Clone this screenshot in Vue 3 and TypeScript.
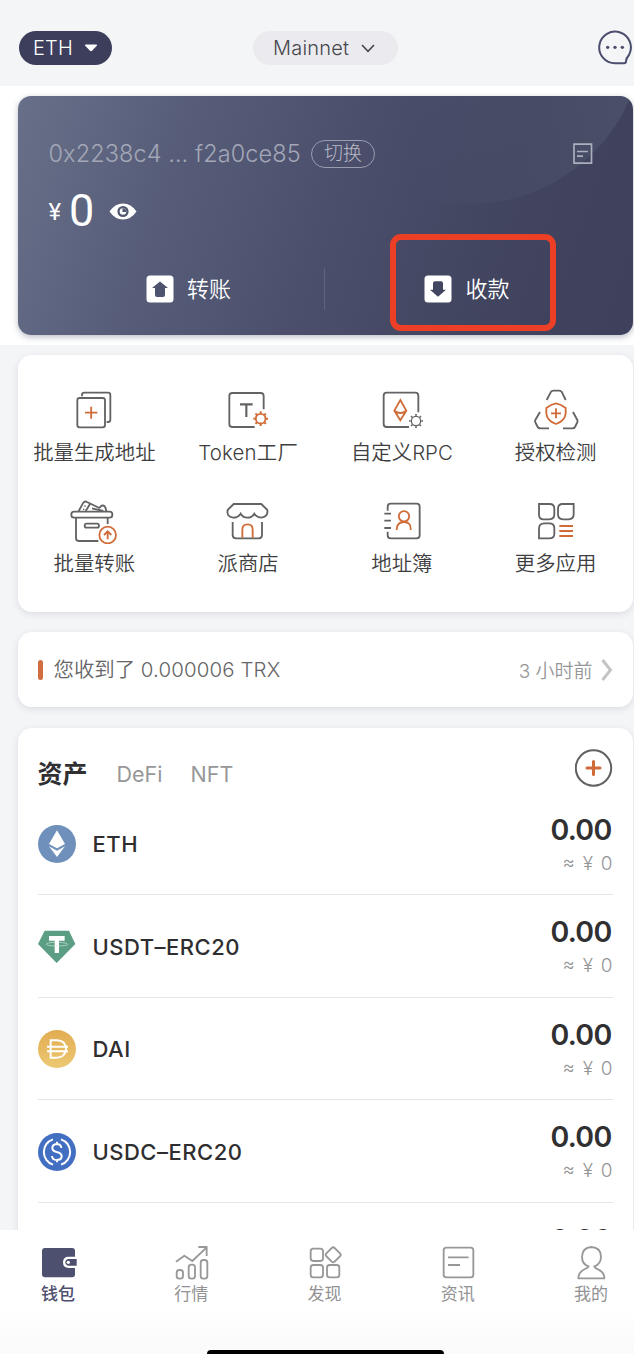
<script setup lang="ts">
interface Token {
  id: string
  name: string
}

const tokens: Token[] = [
  { id: 'eth', name: 'ETH' },
  { id: 'usdt', name: 'USDT–ERC20' },
  { id: 'dai', name: 'DAI' },
  { id: 'usdc', name: 'USDC–ERC20' },
  { id: 'next', name: '' },
]
const teeth: number[] = [0, 45, 90, 135, 180, 225, 270, 315]
</script>

<template>
  <div class="app">
    <header class="top">
      <div class="pill chain">
        <span>ETH</span>
        <svg width="14" height="8" viewBox="0 0 14 8"><path d="M1.5.5h11q1 .4.3 1.2L8 6.8q-1 .8-2 0L1.200 1.700Q.5.900 1.500.500z" fill="#fff" /></svg>
      </div>
      <div class="pill network">
        <span>Mainnet</span>
        <svg width="14" height="9" viewBox="0 0 14 9"><path d="M1 1l6 6.300L13 1" fill="none" stroke="#46464c" stroke-width="1.600" /></svg>
      </div>
      <svg class="chat" width="36" height="36" viewBox="532 90 108 108">
        <path d="M586 190A47.500 47.500 0 1 1 628 165Q620 174 619 183Q619 190 613 190Z" fill="none" stroke="#4b4d6d" stroke-width="6" stroke-linejoin="round" />
        <g fill="#4b4d6d"><circle cx="564" cy="142" r="5" /><circle cx="586" cy="142" r="5" /><circle cx="608" cy="142" r="5" /></g>
      </svg>
    </header>

    <section class="wallet-wrap">
      <div class="wallet">
        <div class="glow-clip"><div class="glow"></div></div>
        <div class="address-row">
          <span class="address">0x2238c4 ... f2a0ce85</span>
          <span class="switch">切换</span>
          <svg class="doc" width="20" height="22" viewBox="0 0 20 22" fill="none" stroke="#aaaebd" stroke-width="1.700"><path d="M1 1.200h17.500v19H1zM4 8.500h11M4 13.200h6" /></svg>
        </div>
        <div class="balance">
          <span class="yen">¥</span><span class="zero">0</span>
          <svg width="28" height="17" viewBox="0 0 28 17">
            <path d="M.5 8.500Q6 .5 14 .5t13.500 8Q22 16.500 14 16.500T.5 8.500z" fill="#fff" />
            <circle cx="14" cy="8.500" r="5.600" fill="#51576f" /><circle cx="14" cy="8.500" r="3.300" fill="#fff" />
            <path d="M13.500 8.900V5.200a3.300 3.300 0 0 1 3.700 3.700z" fill="#51576f" />
          </svg>
        </div>
        <div class="actions">
          <div class="action send">
            <svg width="28" height="28" viewBox="0 0 28 28"><rect x=".5" y=".5" width="27" height="27" rx="3.500" fill="#fff" /><path d="M14 6.500l8 6.500h-3v7q0 2-2 2h-6q-2 0-2-2v-7H6z" fill="#4e536f" /></svg>
            <span>转账</span>
          </div>
          <div class="divider"></div>
          <div class="action receive">
            <svg width="28" height="28" viewBox="0 0 28 28"><rect x=".5" y=".5" width="27" height="27" rx="3.500" fill="#fff" /><path d="M14 21.800l8-7h-3V8.300q0-2-2-2h-6q-2 0-2 2v6.500H6z" fill="#42455f" /></svg>
            <span>收款</span>
          </div>
        </div>
        <div class="highlight"></div>
      </div>
    </section>

    <main class="content">
      <section class="card features">
        <div class="feature">
          <svg class="ficon" viewBox="140 30 168 144">
            <path d="M188 64v-4q0-7 7-7h71q7 0 7 7v74q0 7-7 7h-4" /><rect x="174" y="69" width="83" height="88" rx="7" /><path class="o" d="M197 113h37M215.500 95v36" />
          </svg>
          <span>批量生成地址</span>
        </div>
        <div class="feature">
          <svg class="ficon" viewBox="601 30 168 144">
            <path d="M732 103V63q0-9-9-9h-85q-9 0-9 9v84q0 9 9 9h67" /><path d="M661 88h38M680 88v38" stroke-width="6.500" />
            <circle class="o" cx="723" cy="131" r="14.500" /><g class="o" stroke-width="6"><path v-for="a in teeth" :key="a" d="M723 115v-6" :transform="`rotate(${a} 723 131)`" /></g>
          </svg>
          <span class="latin">Token工厂</span>
        </div>
        <div class="feature">
          <svg class="ficon" viewBox="132 30 168 144">
            <path d="M265 112V62q0-9-9-9h-86q-9 0-9 9v85q0 9 9 9h67" /><path class="o" d="M211 75l18 32-18 29-18-29zM193 107q18 14 36 0" />
            <circle cx="258" cy="138" r="14" stroke-width="4" /><g stroke-width="5"><path v-for="a in teeth" :key="a" d="M258 122v-5" :transform="`rotate(${a} 258 138)`" /></g>
          </svg>
          <span>自定义RPC</span>
        </div>
        <div class="feature">
          <svg class="ficon" viewBox="593 30 168 144">
            <path d="M649 75l12-23q3-5 9-5h16q6 0 9 5l11 23M629 111l-14 24q-2 4 0 7l7 14q2 4 8 4h26M728 111l13 24q2 4 0 7l-7 14q-2 4-8 4h-28" />
            <path class="o" d="M677 85q15 3 29 14v16q-2 23-29 32-27-9-29-32V99q14-11 29-14zM662 115h30M677 100v30" />
          </svg>
          <span>授权检测</span>
        </div>
        <div class="feature">
          <svg class="ficon" viewBox="140 363 168 144">
            <path d="M178 408l14-25q4-6 11-2l37 18 7-7q11-4 14 17M214 384l-15 24M218 400l34 8" /><path d="M197 391v4M205 396v4M193 401v4" stroke-width="4" />
            <rect x="156" y="410" width="123" height="18" rx="8" /><path d="M170 429v61q0 8 8 8h59M265 429v18" /><rect x="196" y="446" width="43" height="12" rx="6" />
            <circle class="o" cx="265" cy="480" r="25" /><path class="o" d="M265 493v-23M254 480l11-11 11 11" />
          </svg>
          <span>批量转账</span>
        </div>
        <div class="feature">
          <svg class="ficon" viewBox="601 363 168 144">
            <path d="M642 387h83l18 18q3 20-17 23-15-1-22-12-7 12-21 12-14 0-20-12-8 12-23 12-20-3-16-23z" /><path d="M639 441v39q0 10 10 10h68q10 0 10-10v-39" />
            <path class="o" d="M668 488v-24q0-16 16-16 15 0 15 16v24" />
          </svg>
          <span>派商店</span>
        </div>
        <div class="feature">
          <svg class="ficon" viewBox="132 363 168 144">
            <path d="M173 407v-12q0-9 9-9h78q9 0 9 9v86q0 9-9 9h-78q-9 0-9-9v-11M163 416h20M163 437h20M163 459h20" />
            <circle class="o" cx="222" cy="424" r="15.500" /><path class="o" d="M200 465q0-24 22-24t20 24" />
          </svg>
          <span>地址簿</span>
        </div>
        <div class="feature">
          <svg class="ficon" viewBox="593 363 168 144">
            <path d="M626 387h32q14 0 14 14v17q0 15-15 15h-17q-14 0-14-14zM730 387h-33q-14 0-14 14v17q0 15 15 15h17q15 0 15-15zM626 490v-29q0-16 16-16h15q15 0 15 15v16q0 14-15 14z" />
            <path class="o" d="M687 453h41M687 468h41M687 483h41" />
          </svg>
          <span>更多应用</span>
        </div>
      </section>

      <section class="card notice">
        <i class="mark"></i>
        <span class="message">您收到了 <b>0.000006 TRX</b></span>
        <span class="time">3 小时前</span>
        <svg width="12" height="22" viewBox="0 0 12 22"><path d="M1.500 1l8 10-8 10" fill="none" stroke="#c4c4c6" stroke-width="3" /></svg>
      </section>

      <section class="card assets">
        <div class="tabs">
          <strong>资产</strong><span class="defi">DeFi</span><span class="nft">NFT</span>
          <svg width="38" height="38" viewBox="0 0 38 38" fill="none"><circle cx="18.500" cy="19" r="17.700" stroke="#616163" stroke-width="2" /><path d="M12 19h13M18.500 12.500v13" stroke="#cf6b38" stroke-width="3" stroke-linecap="round" /></svg>
        </div>
        <div v-for="token in tokens" :key="token.id" class="token">
          <svg v-if="token.id === 'eth'" class="coin" viewBox="114 675 114 114">
            <circle cx="171" cy="732" r="57" fill="#6f90bb" /><path d="M171 691l24 41-24 13-24-13z" fill="#fff" /><path d="M147 739l24 13 24-13-24 32z" fill="#fff" />
          </svg>
          <svg v-else-if="token.id === 'usdt'" class="coin" viewBox="54 84 114 114">
            <path d="M74 92h73l19 40-56 57-56-57z" fill="#5b9e83" /><path d="M87 108h47v14h-17v37h-13v-37H87z" fill="#fff" /><path d="M104 127q-25 1-25 6 2 5 31 5 31 0 33-5-1-5-26-6" fill="none" stroke="#d5e9e0" stroke-width="2" />
          </svg>
          <svg v-else-if="token.id === 'dai'" class="coin" viewBox="54 390 114 114">
            <defs><linearGradient id="daiGold" x2="0" y2="1"><stop stop-color="#e2ac51" /><stop offset="1" stop-color="#ecc873" /></linearGradient></defs>
            <circle cx="111" cy="447" r="57" fill="url(#daiGold)" /><path d="M92 421h18q27 1 28 26-2 25-28 26H92zM81 440h63M81 454h63" fill="none" stroke="#fff" stroke-width="6" />
          </svg>
          <svg v-else-if="token.id === 'usdc'" class="coin" viewBox="54 698 114 114">
            <circle cx="111" cy="755" r="57" fill="#426fc1" />
            <path d="M99 717a40 40 0 0 0 0 76M123 717a40 40 0 0 1 0 76" fill="none" stroke="#fff" stroke-width="6" />
            <path d="M124 743q-1-12-14-12-13 1-13 12 0 9 13 12 15 3 15 13-1 11-15 11-13 0-14-12M111 724v8M111 778v8" fill="none" stroke="#fff" stroke-width="6" />
          </svg>
          <span v-if="token.name" class="token-name">{{ token.name }}</span>
          <div class="amount"><strong>0.00</strong><small v-if="token.name">≈ ¥ 0</small></div>
        </div>
      </section>
    </main>

    <nav class="nav">
      <div class="tab active">
        <svg viewBox="108 159 132 114"><rect x="126" y="174" width="99" height="88" rx="9" fill="#4e506f" /><path d="M228 200h-22q-17 0-17 17t17 17h22z" fill="#fff" /><path d="M230 207h-24q-10 1-10 10t10 10h24z" fill="#4e506f" /><circle cx="205" cy="217" r="5" fill="#fff" /></svg>
        <span>钱包</span>
      </div>
      <div class="tab">
        <svg class="line" viewBox="508 159 132 114"><path d="M529 215l25-18 24 16 43-41M596 171h25v27" /><rect x="531" y="240" width="19" height="26" rx="8" /><rect x="567" y="224" width="19" height="42" rx="8" /><rect x="603" y="210" width="20" height="56" rx="8" /></svg>
        <span>行情</span>
      </div>
      <div class="tab">
        <svg class="line" viewBox="38 159 132 114"><rect x="61" y="176" width="37" height="37" rx="8" /><rect x="111" y="177" width="35" height="35" rx="6" transform="rotate(45 128.500 194.500)" /><rect x="61" y="225" width="37" height="37" rx="8" /><rect x="110" y="225" width="37" height="37" rx="8" /></svg>
        <span>发现</span>
      </div>
      <div class="tab">
        <svg class="line" viewBox="438 159 132 114"><rect x="461" y="173" width="89" height="89" rx="8" /><path d="M474 202h62M474 225h36" /></svg>
        <span>资讯</span>
      </div>
      <div class="tab">
        <svg class="line" viewBox="837 159 132 114"><path d="M896 229q-20-6-20-29 1-27 28-29 29 2 29 29 0 22-20 29 0 4 11 9 19 8 19 27h-78q1-20 20-28 10-4 11-8z" /></svg>
        <span>我的</span>
      </div>
      <div class="home"></div>
    </nav>
  </div>
</template>

<style>
body { margin: 0; }
</style>

<style scoped>
.app {
  box-sizing: border-box;
  width: 634px;
  height: 1354px;
  overflow: hidden;
  display: flex;
  flex-direction: column;
  background: #f4f5f7;
  color: #3e3e40;
  font-family: Inter, "Noto Sans CJK SC", sans-serif;
}
svg { display: block; flex: none; }
span, strong, small { white-space: nowrap; }
.top { height: 86px; flex: none; display: flex; align-items: center; padding: 10px 1px 0 19px; box-sizing: border-box; }
.pill { height: 34px; border-radius: 17px; display: flex; align-items: center; box-sizing: border-box; font-size: 20px; }
.chain { width: 93px; padding-left: 14px; gap: 11px; background: #3c3e5c; color: #fff; font-weight: 300; letter-spacing: .2px; }
.network { width: 145px; margin-left: 141px; padding-left: 20px; gap: 12px; background: #ebebef; color: #46464c; }
.network span { letter-spacing: .2px; font-weight: 350; }
.chat { margin-left: auto; }
.wallet-wrap { height: 259px; flex: none; padding: 10px 1.500px 10px 17.500px; box-sizing: border-box; background: #fff; }
.wallet { position: relative; height: 239px; border-radius: 13px; box-sizing: border-box; padding: 42px 31px 0; background: linear-gradient(108deg, #687089 0%, #575d79 25%, #4b4f6c 50%, #42455f 75%, #3e405c 100%); box-shadow: 0 2px 6px rgb(60 65 90 / 35%); }
.glow-clip { position: absolute; inset: 0; overflow: hidden; border-radius: 13px; }
.glow { position: absolute; left: 278.500px; top: -240px; width: 348px; height: 348px; border-radius: 50%; background: linear-gradient(90deg, rgb(110 130 145 / 0) 35%, rgb(110 130 145 / 22%) 100%); }
.address-row { position: relative; display: flex; align-items: center; height: 32px; color: #a3a7b7; }
.address { font-size: 23.500px; font-weight: 350; width: 262.500px; letter-spacing: .08px; line-height: 30px; margin-top: -1px; }
.switch { box-sizing: border-box; width: 64px; height: 28px; border: 1px solid #989daf; border-radius: 14px; line-height: 26px; text-align: center; font-size: 19px; font-weight: 300; color: #b5b8c5; }
.doc { margin-left: auto; margin-right: 9px; }
.balance { position: relative; display: flex; align-items: center; height: 50px; margin-top: 17px; color: #fff; }
.balance svg { margin-top: -1px; }
.yen { font-size: 24px; width: 20.500px; font-family: Roboto, sans-serif; }
.zero { font-family: Roboto, sans-serif; font-size: 45px; width: 39.500px; line-height: 50px; margin-top: -3px; font-weight: 400; }
.actions { display: flex; align-items: center; height: 42px; margin-top: 31px; color: #fff; font-size: 22px; }
.action { display: flex; align-items: center; gap: 13px; line-height: 32px; }
.action span { font-weight: 350; }
.send { margin-left: 97px; width: 178px; }
.send span { margin-left: .5px; }
.divider { width: 1px; height: 42px; background: #60637e; }
.receive { margin-left: 99px; }
.receive span { margin-left: 1px; }
.highlight { position: absolute; left: 372px; top: 138px; width: 166px; height: 97px; box-sizing: border-box; border: 6px solid #ec3f26; border-radius: 11px; }
.content { flex: none; height: 885px; overflow: hidden; box-sizing: border-box; padding: 10px 1.500px 0 17.500px; }
.card { background: #fff; border-radius: 14px; box-shadow: 0 2px 7px rgb(40 50 70 / 12%); box-sizing: border-box; }
.features { height: 257px; padding-top: 30px; display: grid; grid-template-columns: repeat(4, 1fr); grid-auto-rows: 88px; row-gap: 23px; }
.feature { display: flex; flex-direction: column; align-items: center; }
.feature span { font-size: 20.400px; line-height: 40px; font-weight: 350; }
.feature .latin { letter-spacing: .2px; }
.ficon { width: 56px; height: 48px; fill: none; stroke: #636366; stroke-width: 5.500; }
.ficon .o { stroke: #d06c38; }
.notice { height: 75px; margin-top: 20px; padding: 0 20px; display: flex; align-items: center; }
.mark { width: 5px; height: 20px; border-radius: 3px; background: #d06e3f; margin-right: 11px; }
.message { font-size: 20.400px; color: #656567; font-weight: 350; line-height: 30px; margin-top: 1px; }
.message b { font-weight: 350; letter-spacing: .15px; }
.time { margin-left: auto; margin-right: 8px; margin-top: -1px; font-size: 19px; color: #969698; font-weight: 350; }
.assets { height: 620px; margin-top: 21px; padding: 0 20px; }
.tabs { height: 64.500px; display: flex; align-items: center; padding-top: 27px; box-sizing: border-box; font-size: 21.500px; color: #979799; }
.tabs strong { font-size: 25px; font-weight: 700; color: #303032; width: 79px; line-height: 38px; }
.defi { width: 74px; }
.tabs svg { margin-left: auto; margin-top: -12px; }
.token { height: 102.500px; box-sizing: border-box; padding-top: 2px; border-bottom: 1px solid #e6e6e8; display: flex; align-items: center; }
.coin { width: 38px; height: 38px; margin-right: 17px; }
.token-name { font-size: 22px; font-weight: 450; color: #2e2e30; letter-spacing: .5px; }
.amount { height: 68px; margin: 1px 0 0 auto; display: flex; flex-direction: column; align-items: flex-end; }
.amount strong { font-size: 28.500px; line-height: 38px; font-weight: 600; color: #303032; letter-spacing: -.7px; padding-right: 1px; }
.amount small { font-size: 19px; line-height: 30px; color: #969698; font-weight: 350; word-spacing: 2.500px; }
.nav { position: relative; height: 124px; flex: none; background: linear-gradient(#fff 60%, #fafafa); display: flex; justify-content: space-between; padding: 13px 10px 0 25px; box-sizing: border-box; }
.tab { width: 66px; display: flex; flex-direction: column; align-items: center; color: #929294; }
.tab svg { width: 44px; height: 38px; }
.tab span { font-size: 17px; line-height: 27px; }
.active { color: #4e506f; }
.active span { font-weight: 500; }
.line { fill: none; stroke: #98989a; stroke-width: 5.500; stroke-linejoin: round; }
.home { position: absolute; left: 207px; bottom: 0; width: 237px; height: 4px; border-radius: 4px 4px 0 0; background: #000; }
</style>
